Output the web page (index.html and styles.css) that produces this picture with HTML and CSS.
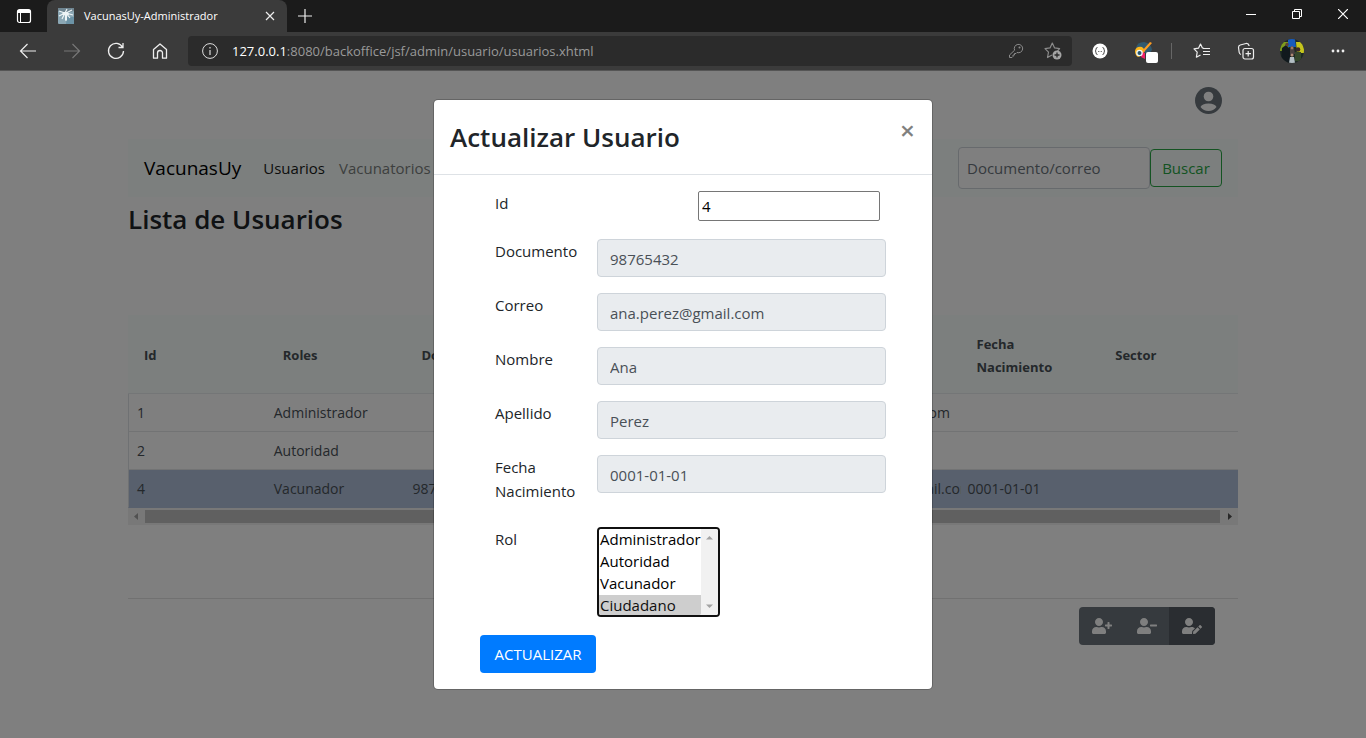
FILE: index.html
```html
<!DOCTYPE html>
<html lang="es">
<head>
<meta charset="utf-8">
<title>VacunasUy-Administrador</title>
<link rel="stylesheet" href="styles.css">
</head>
<body>
<div class="browser">
  <div class="titlebar">
    <button class="tab-actions" type="button" aria-label="Acciones de pestañas">
      <svg width="16" height="16" viewBox="0 0 16 16"><rect x="1.5" y="1.5" width="13" height="13" rx="2" fill="none" stroke="#fff" stroke-width="1.2"/><path d="M2 2h12v3H2z" fill="#fff"/><path d="M4.5 5v9" stroke="#fff"/></svg>
    </button>
    <div class="tab">
      <svg width="16" height="16" viewBox="0 0 16 16"><rect width="16" height="16" rx="1" fill="#8ba7b4"/><path d="M0 0h16v3L9 5 0 3z" fill="#6f8591"/><path d="M9 9h7v7H8z" fill="#6c93a6"/><path d="M1 3l6 2 2-4M8 5l6-3M7 5L1 8M8 5l7 2M7 5l-3 6M8 5l4 5M7.500 5L8 13" fill="none" stroke="#eef4f6" stroke-width="1.200"/><path d="M5 4h5l1 3H9v5H7V7H4z" fill="#eef4f6"/></svg>
      <span class="tab-title">VacunasUy-Administrador</span>
      <button class="tab-close" type="button" aria-label="Cerrar pestaña"><svg width="10" height="10" viewBox="0 0 10 10"><path d="M1 1l8 8M9 1L1 9" stroke="#eee" stroke-width="1.2"/></svg></button>
    </div>
    <button class="new-tab" type="button" aria-label="Nueva pestaña"><svg width="14" height="14" viewBox="0 0 14 14"><path d="M7 0v14M0 7h14" stroke="#eee" stroke-width="1.2"/></svg></button>
    <div class="window-controls">
      <button type="button" aria-label="Minimizar"><svg width="10" height="10" viewBox="0 0 10 10"><path d="M0 5.5h10" stroke="#fff"/></svg></button>
      <button type="button" aria-label="Restaurar"><svg width="10" height="10" viewBox="0 0 10 10"><path d="M.5 2.5h7v7h-7zM2.5 2.5v-2h7v7h-2" fill="none" stroke="#fff"/></svg></button>
      <button type="button" aria-label="Cerrar"><svg width="10" height="10" viewBox="0 0 10 10"><path d="M0 0l10 10M10 0L0 10" stroke="#fff" stroke-width="1.2"/></svg></button>
    </div>
  </div>

  <div class="toolbar">
    <button class="tool" type="button" aria-label="Atrás"><svg width="18" height="16" viewBox="0 0 18 16"><path d="M17 8H1.5M8.500 1L1.500 8l7 7" fill="none" stroke="#eee" stroke-width="1.2"/></svg></button>
    <button class="tool" type="button" aria-label="Adelante"><svg width="18" height="16" viewBox="0 0 18 16"><path d="M1 8h15.500M9.500 1l7 7-7 7" fill="none" stroke="#777" stroke-width="1.2"/></svg></button>
    <button class="tool" type="button" aria-label="Actualizar página"><svg width="18" height="18" viewBox="0 0 18 18"><path d="M15.700 5.500A7.500 7.500 0 1 0 16.500 9M16 1v4.500h-4.500" fill="none" stroke="#eee" stroke-width="1.300"/></svg></button>
    <button class="tool" type="button" aria-label="Inicio"><svg width="16" height="18" viewBox="0 0 16 18"><path d="M1.500 7.500L8 2l6.500 5.500v8.700h-4V11a2.500 2.500 0 0 0-5 0v5.200h-4z" fill="none" stroke="#eee" stroke-width="1.300" stroke-linejoin="round"/></svg></button>
    <div class="address">
      <svg width="16" height="16" viewBox="0 0 16 16"><circle cx="8" cy="8" r="7.400" fill="none" stroke="#ddd"/><path d="M8 7v5M8 4v1.500" stroke="#ddd" stroke-width="1.200"/></svg>
      <span class="url"><span class="host">127.0.0.1</span>:8080/backoffice/jsf/admin/usuario/usuarios.xhtml</span>
      <svg width="16" height="16" viewBox="0 0 16 16"><path d="M6.600 7.200A4.200 4.200 0 1 1 9 9.500L8 10.500H6.500V12H5v1.500L4 14.500H1.500V12z" fill="none" stroke="#8b8b8b" stroke-linejoin="round"/><circle cx="11.500" cy="4.500" r="1" fill="#8b8b8b"/></svg>
      <svg width="18" height="18" viewBox="0 0 18 18"><path d="M8 13l-4.500 2.500 1-5.300L1 6.600l5-.7L8.300 1l2.300 4.900 5 .7L13.500 9" fill="none" stroke="#8b8b8b" stroke-width="1.200" stroke-linejoin="round"/><circle cx="13" cy="13" r="4.500" fill="#a5a5a5"/><path d="M13 10.500v5M10.500 13h5" stroke="#2b2b2b" stroke-width="1.300"/></svg>
    </div>
    <button class="tool" type="button" aria-label="Extensión JSON"><svg width="16" height="16" viewBox="0 0 16 16"><circle cx="8" cy="8" r="7.500" fill="#fff"/><path d="M5.500 4.500Q4 4.500 4 6.200T3 8q1 0 1 1.800t1.500 1.700M10.500 4.500Q12 4.500 12 6.200T13 8q-1 0-1 1.800t-1.500 1.700" fill="none" stroke="#444"/><path d="M6 8.500h1M7.600 8.500h.8M9 8.500h1" stroke="#777"/></svg></button>
    <button class="tool" type="button" aria-label="Selector de color"><svg width="24" height="24" viewBox="0 0 24 24"><path d="M4 9Q5 3 12 3q7 1 8 8l-3 4-6-2z" fill="#315a70"/><path d="M3 12q1-5 7-4l3 3-2 5-5 2q-3-2-3-6z" fill="#ffb71b"/><path d="M10 13l3 1v6l-4-2z" fill="#f01f68"/><path d="M10 12l8-9 2 1-8 9z" fill="#ff9d22"/><circle cx="7.500" cy="14" r="3.300" fill="#eef8fa"/><circle cx="7.500" cy="14" r="2" fill="#28566c"/><rect x="14" y="13" width="12" height="11" rx="2" fill="#fff"/></svg></button>
    <span class="tool-separator"></span>
    <button class="tool" type="button" aria-label="Favoritos"><svg width="18" height="16" viewBox="0 0 18 16"><path d="M10.500 5.200L9.400 5 7.500 1 5.500 5.200 1 5.900l3.200 3.300-.8 5L7.500 12" fill="none" stroke="#eee" stroke-width="1.200" stroke-linejoin="round"/><path d="M10 5.500h7M10 8.500h7M10 11.500h7" stroke="#eee" stroke-width="1.200"/></svg></button>
    <button class="tool" type="button" aria-label="Colecciones"><svg width="18" height="18" viewBox="0 0 18 18"><rect x="6" y="6.500" width="10.500" height="10.500" rx="2" fill="none" stroke="#eee" stroke-width="1.200"/><path d="M11.200 9v5.500M8.500 11.700H14M4 12.500Q2.500 12 2.200 10.500L1.500 5.500Q1.500 3.500 3.200 3L9 1.500q2.500-.3 3 2V4" fill="none" stroke="#eee" stroke-width="1.200"/></svg></button>
    <button class="tool profile" type="button" aria-label="Perfil"><svg width="24" height="24" viewBox="0 0 24 24"><defs><clipPath id="face"><circle cx="12" cy="12" r="12"/></clipPath></defs><g clip-path="url(#face)"><path d="M0 0h24v24H0z" fill="#1d2b24"/><path d="M0 3h9v9H0z" fill="#7d9a1d"/><path d="M16 3h8v11h-7z" fill="#c4c41d"/><path d="M8 0h7l1 8H8z" fill="#185bbd"/><path d="M2 9l4-3 5 5v13H1z" fill="#11191d"/><circle cx="7" cy="5.500" r="1.700" fill="#5e4336"/><path d="M10 9q2-4 4 0l1 6h-5z" fill="#4a4140"/><circle cx="12" cy="9" r="1.400" fill="#a07862"/><circle cx="18" cy="10.500" r="2.300" fill="#3b2928"/><path d="M15 13h6v9h-6z" fill="#35472b"/><circle cx="12" cy="16" r="1.600" fill="#b08a76"/><path d="M10 18h4l1 6H9z" fill="#b3bec4"/></g></svg></button>
    <button class="tool" type="button" aria-label="Más opciones"><svg width="14" height="4" viewBox="0 0 14 4"><circle cx="2" cy="2" r="1.400" fill="#eee"/><circle cx="7" cy="2" r="1.400" fill="#eee"/><circle cx="12" cy="2" r="1.400" fill="#eee"/></svg></button>
  </div>

  <div class="viewport">
    <main class="container">
      <div class="account-bar">
        <button class="account" type="button" aria-label="Cuenta"><svg width="28" height="28" viewBox="0 0 28 28"><circle cx="13.500" cy="13.500" r="13.500" fill="#6c757d"/><circle cx="13.500" cy="9.500" r="4.800" fill="#fff"/><path d="M5.500 20Q7 16.500 13.500 16.500t8 3.500Q18.500 24 13.500 24t-8-4z" fill="#fff"/></svg></button>
      </div>
      <nav class="navbar">
        <a class="brand" href="#">VacunasUy</a>
        <a class="nav-link active" href="#">Usuarios</a>
        <a class="nav-link" href="#">Vacunatorios</a>
        <form class="search">
          <input class="search-input" type="text" placeholder="Documento/correo" aria-label="Documento/correo">
          <button class="search-button" type="button">Buscar</button>
        </form>
      </nav>
      <h2 class="page-title">Lista de Usuarios</h2>
      <table class="users">
        <thead>
          <tr><th>Id</th><th>Roles</th><th>Documento</th><th>Nombre</th><th>Apellido</th><th>Correo</th><th>Fecha Nacimiento</th><th>Sector</th></tr>
        </thead>
        <tbody>
          <tr><td>1</td><td>Administrador</td><td></td><td></td><td></td><td>admin@gmail.com</td><td></td><td></td></tr>
          <tr><td>2</td><td>Autoridad</td><td></td><td></td><td></td><td></td><td></td><td></td></tr>
          <tr class="selected"><td>4</td><td>Vacunador</td><td>98765432</td><td>Ana</td><td>Perez</td><td>ana.perez@gmail.com</td><td>0001-01-01</td><td></td></tr>
        </tbody>
      </table>
      <div class="scrollbar">
        <svg width="17" height="13" viewBox="0 0 17 13"><path d="M10 3v7L6 6.500z" fill="#a3a3a3"/></svg>
        <div class="scroll-thumb"></div>
        <svg width="18" height="13" viewBox="0 0 18 13"><path d="M8 3v7l4-3.500z" fill="#505050"/></svg>
      </div>
      <div class="actions">
        <div class="button-group">
          <button type="button" aria-label="Agregar usuario"><svg width="20" height="16" viewBox="0 0 640 512"><path fill="#fff" d="M624 208h-64v-64c0-8.800-7.200-16-16-16h-32c-8.800 0-16 7.200-16 16v64h-64c-8.800 0-16 7.200-16 16v32c0 8.800 7.200 16 16 16h64v64c0 8.800 7.200 16 16 16h32c8.800 0 16-7.200 16-16v-64h64c8.800 0 16-7.200 16-16v-32c0-8.800-7.200-16-16-16zm-400 48c70.700 0 128-57.300 128-128S294.700 0 224 0 96 57.300 96 128s57.300 128 128 128zm89.600 32h-16.700c-22.200 10.200-46.900 16-72.900 16s-50.600-5.800-72.900-16h-16.700C60.200 288 0 348.200 0 422.400V464c0 26.500 21.500 48 48 48h352c26.500 0 48-21.500 48-48v-41.600c0-74.200-60.200-134.400-134.400-134.400z"/></svg></button>
          <button type="button" aria-label="Quitar usuario"><svg width="20" height="16" viewBox="0 0 640 512"><path fill="#fff" d="M624 208H432c-8.800 0-16 7.200-16 16v32c0 8.800 7.200 16 16 16h192c8.800 0 16-7.200 16-16v-32c0-8.800-7.200-16-16-16zm-400 48c70.700 0 128-57.300 128-128S294.700 0 224 0 96 57.300 96 128s57.300 128 128 128zm89.600 32h-16.700c-22.200 10.200-46.900 16-72.900 16s-50.600-5.800-72.900-16h-16.700C60.200 288 0 348.200 0 422.400V464c0 26.500 21.500 48 48 48h352c26.500 0 48-21.500 48-48v-41.600c0-74.200-60.200-134.400-134.400-134.400z"/></svg></button>
          <button class="pressed" type="button" aria-label="Editar usuario"><svg width="20" height="16" viewBox="0 0 640 512"><path fill="#fff" d="M224 256c70.700 0 128-57.300 128-128S294.700 0 224 0 96 57.300 96 128s57.300 128 128 128zm89.600 32h-16.700c-22.200 10.200-46.900 16-72.900 16s-50.600-5.800-72.900-16h-16.700C60.200 288 0 348.200 0 422.400V464c0 26.500 21.500 48 48 48h274.900c-2.400-6.800-3.400-14-2.600-21.300l6.800-60.900 1.200-11.100 7.900-7.900 77.300-77.300c-24.500-27.700-60-45.500-99.900-45.500zm45.300 145.300l-6.800 61c-1.100 10.200 7.500 18.800 17.600 17.600l60.900-6.800 137.900-137.900-71.700-71.700-137.900 137.800zM633 268.900L595.100 231c-9.300-9.300-24.500-9.300-33.800 0l-37.800 37.800-4.100 4.100 71.800 71.700 41.800-41.800c9.300-9.400 9.300-24.500 0-33.900z"/></svg></button>
        </div>
      </div>
    </main>

    <div class="backdrop">
      <div class="modal" role="dialog" aria-labelledby="dialog-title">
        <header class="modal-header">
          <h2 class="modal-title" id="dialog-title">Actualizar Usuario</h2>
          <button class="modal-close" type="button" aria-label="Cerrar">×</button>
        </header>
        <form class="modal-form">
          <div class="field"><label for="id">Id</label><input class="plain-input" id="id" type="text" value="4"></div>
          <div class="field"><label for="documento">Documento</label><input class="form-input" id="documento" type="text" value="98765432" readonly></div>
          <div class="field"><label for="correo">Correo</label><input class="form-input" id="correo" type="text" value="ana.perez@gmail.com" readonly></div>
          <div class="field"><label for="nombre">Nombre</label><input class="form-input" id="nombre" type="text" value="Ana" readonly></div>
          <div class="field"><label for="apellido">Apellido</label><input class="form-input" id="apellido" type="text" value="Perez" readonly></div>
          <div class="field"><label for="fecha">Fecha Nacimiento</label><input class="form-input" id="fecha" type="text" value="0001-01-01" readonly></div>
          <div class="field"><label for="rol">Rol</label>
            <div class="listbox">
              <select id="rol" size="4"><option>Administrador</option><option>Autoridad</option><option>Vacunador</option><option selected>Ciudadano</option></select>
              <div class="list-scroll">
                <svg width="9" height="5" viewBox="0 0 9 5"><path d="M1 4.500h7L4.500 1z" fill="#a3a3a3"/></svg>
                <svg width="9" height="5" viewBox="0 0 9 5"><path d="M1 .5h7L4.500 4z" fill="#a3a3a3"/></svg>
              </div>
            </div>
          </div>
          <button class="submit" type="button">ACTUALIZAR</button>
        </form>
      </div>
    </div>
  </div>
</div>
</body>
</html>
```
FILE: styles.css
```css
* { box-sizing: border-box; }
body {
  margin: 0;
  font: 15px/24px "Open Sans", "Noto Sans", sans-serif;
  color: #212529;
}
button, input, select { font: inherit; }
button { padding: 0; border: 0; background: none; cursor: pointer; }
svg { display: block; flex: none; }
h2 { margin: 0; font-weight: 600; }
a { text-decoration: none; }

.browser { display: flex; flex-direction: column; min-height: 100vh; }

/* Window frame */
.titlebar { display: flex; height: 32px; background: #1b1b1b; }
.tab-actions { display: grid; place-items: center; width: 47px; }
.tab {
  display: flex;
  align-items: center;
  gap: 10px;
  width: 240px;
  padding: 0 11px;
  background: #3b3b3b;
  border-radius: 8px 8px 0 0;
  color: #fff;
  font-size: 11px;
}
.tab-title { flex: 1; white-space: nowrap; }
.tab-close { display: grid; place-items: center; width: 12px; height: 24px; }
.new-tab { display: grid; place-items: center; width: 36px; }
.window-controls { display: flex; margin-left: auto; }
.window-controls button { display: grid; place-items: center; width: 46px; height: 28px; }

.toolbar {
  display: flex;
  align-items: center;
  height: 39px;
  padding: 0 6px;
  background: #3b3b3b;
  border-bottom: 1px solid #555;
}
.tool { display: grid; place-items: center; width: 44px; height: 30px; }
.tool svg { overflow: visible; }
.profile { margin: 0 2px; }
.tool-separator { width: 1px; height: 16px; margin: 0 8px 0 5px; background: #666; }
.address {
  display: flex;
  flex: 1;
  align-items: center;
  gap: 20px;
  height: 30px;
  margin: 0 6px;
  padding: 0 10px 0 14px;
  background: #2b2b2b;
  border-radius: 4px;
}
.url { flex: 1; margin-left: -6px; color: #9a9a9a; font-size: 13px; white-space: nowrap; }
.host { color: #fff; }

/* Page */
.viewport { position: relative; flex: 1; background: #fff; }
.container { width: 100%; max-width: 1140px; margin: 0 auto; padding: 0 15px; }
.account-bar { display: flex; justify-content: flex-end; height: 68px; padding: 16px 15px; }
.account { height: 28px; }
.navbar {
  display: flex;
  align-items: center;
  padding: 8px 16px;
  background: #f8fffc;
}
.brand { margin-right: 24px; color: #000; font-size: 19px; }
.nav-link { margin-right: 14px; color: #7b7f7e; }
.brand { margin-right: 22px; }
.nav-link.active { color: #191a19; }
.search { display: flex; align-items: center; margin-left: auto; }
.search-input {
  width: 192px;
  height: 42px;
  padding: 0 8px;
  border: 1px solid #ced4da;
  border-radius: 4px;
  background: #fff;
}
.search-input::placeholder { color: #6c757d; opacity: 1; }
.search-button {
  width: 72px;
  height: 38px;
  border: 1px solid #28a745;
  border-radius: 4px;
  color: #28a745;
}
.page-title { margin-bottom: 74px; font-size: 26px; line-height: 44px; }

.users {
  width: 100%;
  table-layout: fixed;
  border-collapse: separate;
  border-spacing: 0;
  color: #495057;
  font-size: 14px;
  line-height: 23px;
}
.users th {
  height: 79px;
  padding: 3px 16px 0;
  background: #f8fffc;
  border-bottom: 1px solid #e9ecef;
  text-align: left;
  font-size: 13px;
  font-weight: 700;
}
.users td {
  height: 38px;
  padding: 0 7px;
  border-bottom: 1px solid #e4e6e9;
  overflow: hidden;
  white-space: nowrap;
}
.users td:first-child { border-left: 1px solid #dee2e6; padding-left: 8px; }
.users .selected td { background: #b0c0da; border-bottom-color: #b0c0da; }
.scrollbar { display: flex; height: 17px; padding: 2px 0; background: #f1f1f1; }
.scroll-thumb { flex: 1; background: #c1c1c1; }
.actions {
  display: flex;
  justify-content: flex-end;
  margin-top: 73px;
  padding: 8px 23px;
  border-top: 1px solid #e2e2e2;
}
.button-group { display: flex; border-radius: 4px; overflow: hidden; background: #6c757d; }
.button-group button { padding: 11px 12px 11px 13px; }
.button-group .pressed { padding-right: 13px; background: #545b62; }

/* Dialog */
.backdrop {
  position: absolute;
  inset: 0;
  display: flex;
  justify-content: center;
  align-items: flex-start;
  padding-top: 28px;
  background: rgba(0, 0, 0, .5);
}
.modal {
  width: 500px;
  background: #fff;
  background-clip: padding-box;
  border: 1px solid rgba(0, 0, 0, .2);
  border-radius: 5px;
}
.modal-header {
  display: flex;
  justify-content: space-between;
  align-items: flex-start;
  padding: 16px;
  border-bottom: 1px solid #dee2e6;
}
.modal-title { font-size: 26px; line-height: 42px; }
.modal-close { width: 17px; color: #808080; font-size: 26px; font-weight: 600; line-height: 28px; }
.modal-form { padding: 16px 46px; }
.field {
  display: grid;
  grid-template-columns: 102px 1fr;
  align-items: start;
  margin-bottom: 16px;
  padding-left: 15px;
}
.field label { margin-bottom: 8px; padding-right: 15px; }
.form-input {
  width: 100%;
  height: 38px;
  padding: 2px 12px 0;
  background: #e9ecef;
  border: 1px solid #ced4da;
  border-radius: 4px;
  color: #495057;
}
.plain-input {
  justify-self: end;
  width: 182px;
  height: 30px;
  margin-right: 6px;
  padding: 0 3px;
  background: #fff;
  border: 1px solid #767676;
  border-radius: 2px;
  color: #000;
}
.listbox {
  display: flex;
  justify-self: start;
  width: 123px;
  border: 2px solid #101010;
  border-radius: 4px;
  overflow: hidden;
}
.listbox select {
  flex: 1;
  min-width: 0;
  height: 86px;
  padding: 0;
  border: 0;
  outline: 0;
  background: #fff;
  color: #000;
  overflow: hidden;
  scrollbar-width: none;
}
.listbox option { min-height: 22px; padding: 0 1px; line-height: 22px; }
.listbox option:checked { background: #cecece linear-gradient(#cecece, #cecece); }
.list-scroll {
  display: flex;
  flex-direction: column;
  justify-content: space-between;
  align-items: center;
  width: 17px;
  padding: 6px 0;
  background: #f1f1f1;
}
.submit {
  width: 116px;
  height: 38px;
  margin-top: 2px;
  background: #007bff;
  border-radius: 4px;
  color: #fff;
}
```
